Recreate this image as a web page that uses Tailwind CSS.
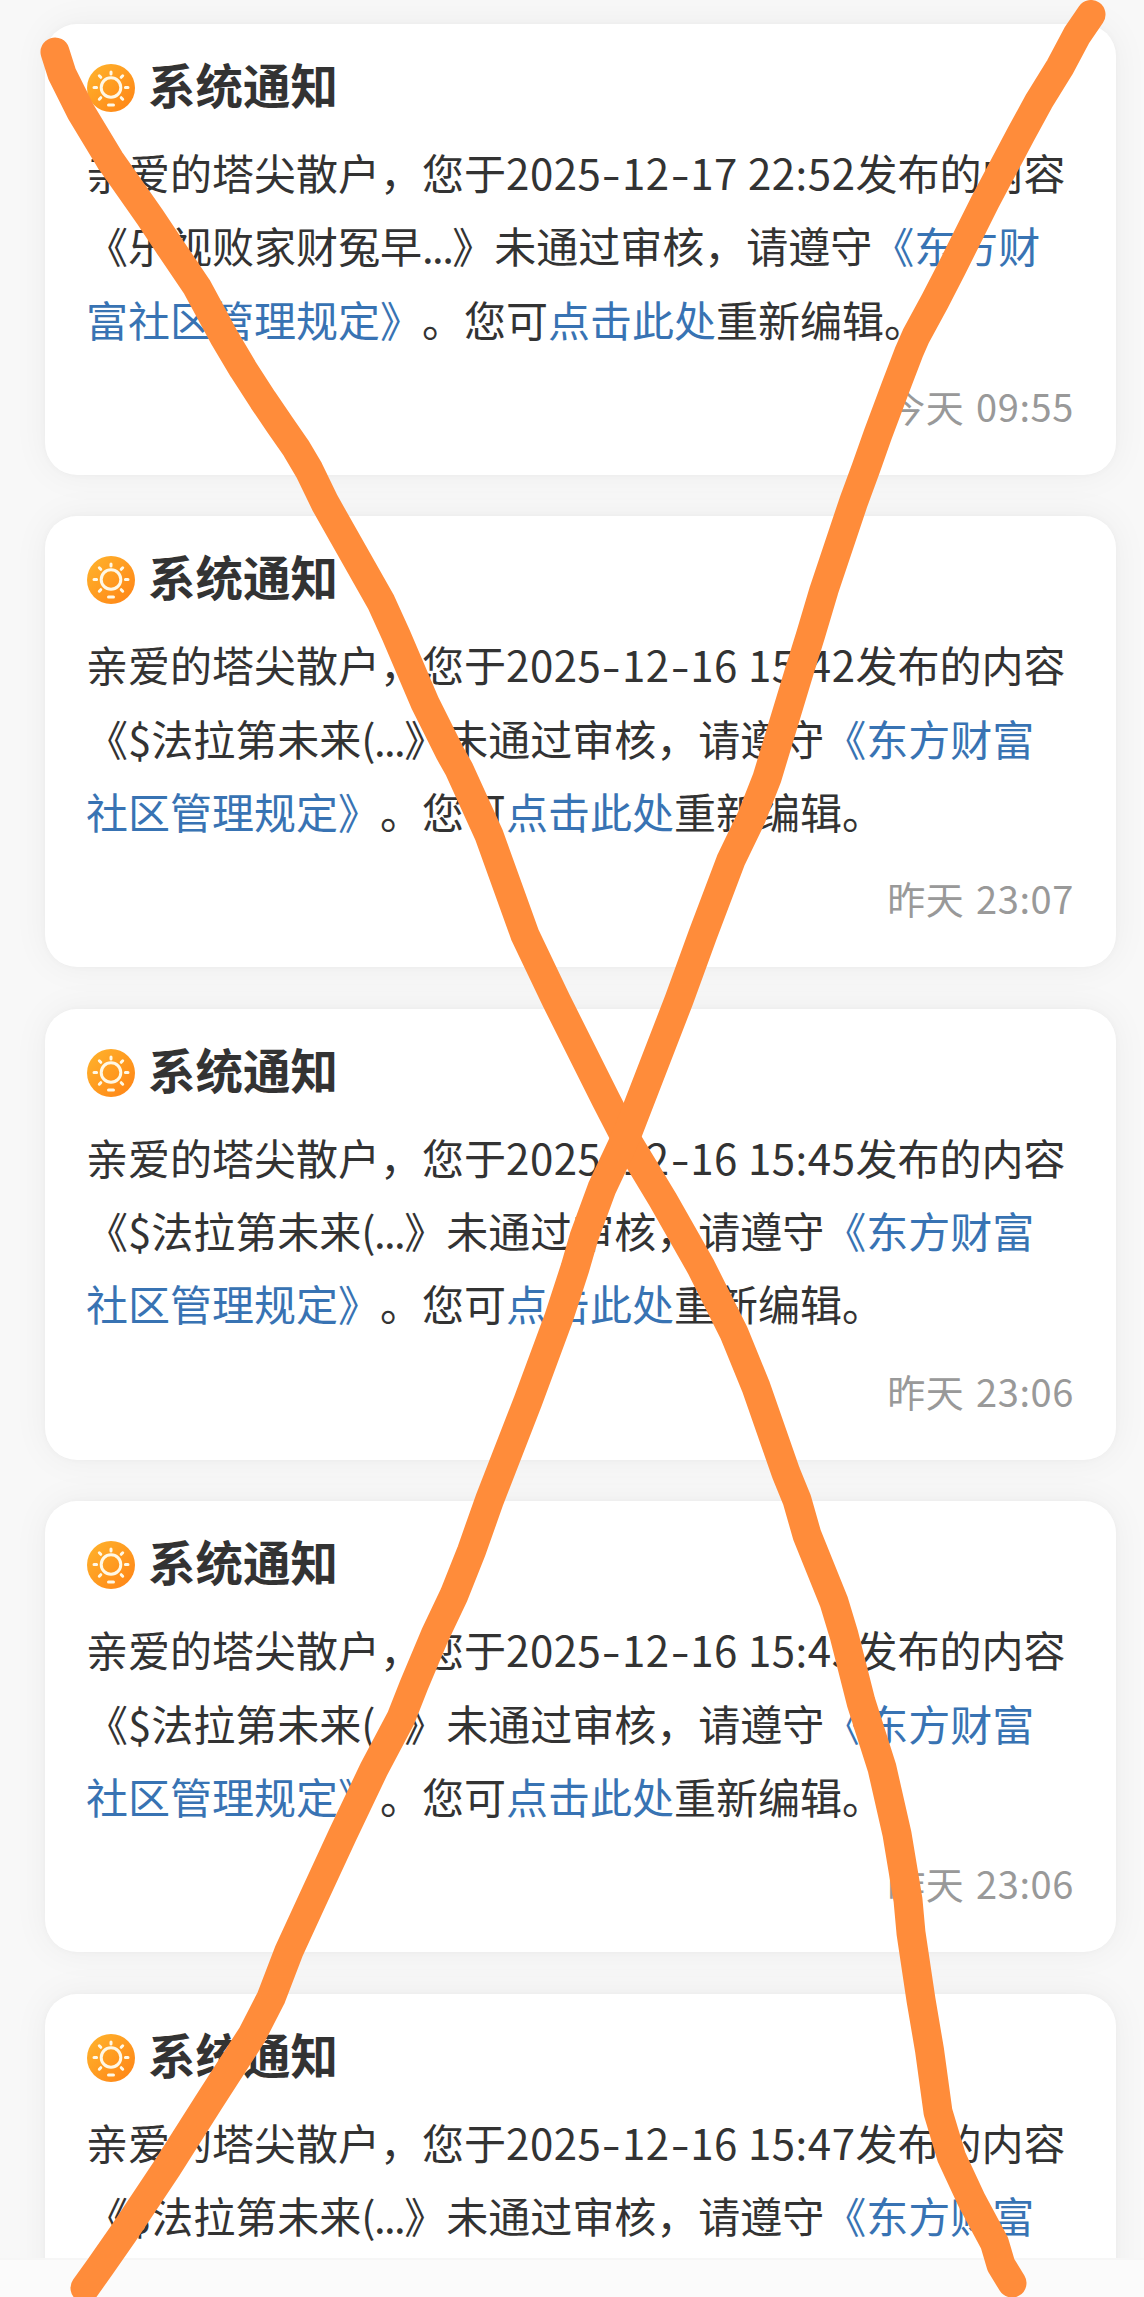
<!DOCTYPE html>
<html lang="zh-CN">
<head>
    <meta charset="UTF-8">
    <meta name="viewport" content="width=device-width, initial-scale=1.0">
    <title>系统通知</title>
    <script src="https://cdn.jsdelivr.net/npm/@tailwindcss/browser@4"></script>
</head>
<body class="relative w-[1144px] h-[2297px] overflow-hidden bg-[#f8f8f8] font-['Noto_Sans_CJK_SC',sans-serif] text-[#333333]">
    <!-- Notification list -->
    <main id="notice-list" class="flex flex-col gap-[41.45px] h-[2258px] overflow-hidden pt-6 pl-[45px] pr-7"></main>

    <!-- Bottom bar -->
    <footer class="h-[39px] border-t-2 border-[#f6f6f6] bg-[#fbfbfb]"></footer>

    <!-- Hand-drawn cross -->
    <svg class="absolute inset-0 w-[1144px] h-[2297px]" viewBox="0 0 1144 2297" fill="none" stroke="#ff8c3a" stroke-width="29" stroke-linecap="round" stroke-linejoin="round">
        <path d="M55 52 L62 74 L81 112 L110 160 L150 217 L172 250 L197 287 L224 337 L243 369 L263 400 L280 425 L296 448 L309 470 L325 503 L381 602 L396 635 L425 703 L450 753 L459 769 L489 835 L525 935 L556 1000 L606 1100 L625 1137 L663 1200 L701 1267 L734 1333 L756 1387 L786 1473 L797 1500 L807 1535 L834 1602 L844 1635 L861 1702 L882 1768 L897 1834 L908 1900 L911 1933 L921 2000 L929.5 2050 L938 2112 L951.5 2157 L971.5 2200 L994.5 2243 L1001 2265 L1012 2283" />
        <path d="M1091 14.5 L1077 35 L1060 67 L1039 101 L1021 134 L1003 168 L985 202 L969 234 L952 268 L935 301 L916 336 L909 352 L896 386 L878 434 L866 468 L853.5 502 L824 590 L810.6 635 L800 669 L780 735 L767 778 L751.7 817 L731 860 L703 934 L679 1000 L626 1137 L602 1188 L584 1237 L575 1268 L558.7 1318 L528 1401 L489.5 1500 L471.5 1551 L454 1595 L435 1635 L414 1685 L401 1718 L374 1769 L343 1834 L312 1901 L289 1951 L271 1998 L252 2035 L209.5 2101 L167 2168 L123 2234 L100 2267 L85 2288" />
    </svg>

    <script>
        const rule = 'text-[#3873b3]';
        const notices = [
            { date: '2025-12-17 22:52', title: '乐视败家财冤早', tail: '...', ruleHead: '《东方财', ruleTail: '富社区管理规定》', time: '今天 09:55' },
            { date: '2025-12-16 15:42', title: '$法拉第未来', tail: '(...', ruleHead: '《东方财富', ruleTail: '社区管理规定》', time: '昨天 23:07' },
            { date: '2025-12-16 15:45', title: '$法拉第未来', tail: '(...', ruleHead: '《东方财富', ruleTail: '社区管理规定》', time: '昨天 23:06' },
            { date: '2025-12-16 15:45', title: '$法拉第未来', tail: '(...', ruleHead: '《东方财富', ruleTail: '社区管理规定》', time: '昨天 23:06' },
            // runs under the bottom bar, only the first two lines show
            { date: '2025-12-16 15:47', title: '$法拉第未来', tail: '(...', ruleHead: '《东方财富' }
        ];

        const sunIcon = `
            <svg class="w-12 h-12 mt-1 shrink-0 rounded-full bg-linear-to-br from-[#ffb42c] to-[#ff8214]" viewBox="0 0 48 48" fill="none" stroke="#fff8e6" stroke-width="3" stroke-linecap="round">
                <circle cx="24" cy="23.5" r="9.8" />
                <path d="M24 8v2M7 23.5h2.6M38.4 23.5h2.6M12.3 11.8l1.5 1.5M35.7 11.8l-1.5 1.5M12.3 35.2l1.5 -1.5M35.7 35.2l-1.5 -1.5M21.5 41h5" />
            </svg>`;

        // wider dash than the font's own
        function formatDate(date) {
            return date.replace(/-/g, '<span class="inline-block w-[20.5px] text-center tracking-normal scale-x-130">-</span>');
        }

        document.getElementById('notice-list').innerHTML = notices.map(n => `
            <article class="h-[451px] shrink-0 rounded-[32px] bg-white pl-[41px] pr-[42px] pt-9 shadow-[0_0_36px_rgba(0,0,0,0.05),0_0_6px_rgba(0,0,0,0.03)]">
                <header class="flex items-start gap-3.5 h-[54px] pl-px">
                    ${sunIcon}
                    <h2 class="-mt-[3px] -ml-px text-[47.5px] leading-[54px] font-bold">系统通知</h2>
                </header>
                <p class="mt-[21px] text-[42px] leading-[73.3px] whitespace-nowrap [text-spacing-trim:space-all]">
                    亲爱的塔尖散户，您于<span class="tracking-[0.55px]">${formatDate(n.date)}</span>发布的内容<br>《${n.title}<span class="tracking-[-1.6px]">${n.tail}</span>》未通过审核，请遵守<a class="${rule}">${n.ruleHead}</a>
                    ${n.ruleTail ? `<br><a class="${rule}">${n.ruleTail}</a>。您可<a class="${rule}">点击此处</a>重新编辑。` : ''}
                </p>
                ${n.time ? `<time class="block mt-[22px] text-right text-[38px] leading-[57px] tracking-[0.6px] [word-spacing:2.5px] text-[#999999]">${n.time}</time>` : ''}
            </article>`).join('');
    </script>
</body>
</html>
